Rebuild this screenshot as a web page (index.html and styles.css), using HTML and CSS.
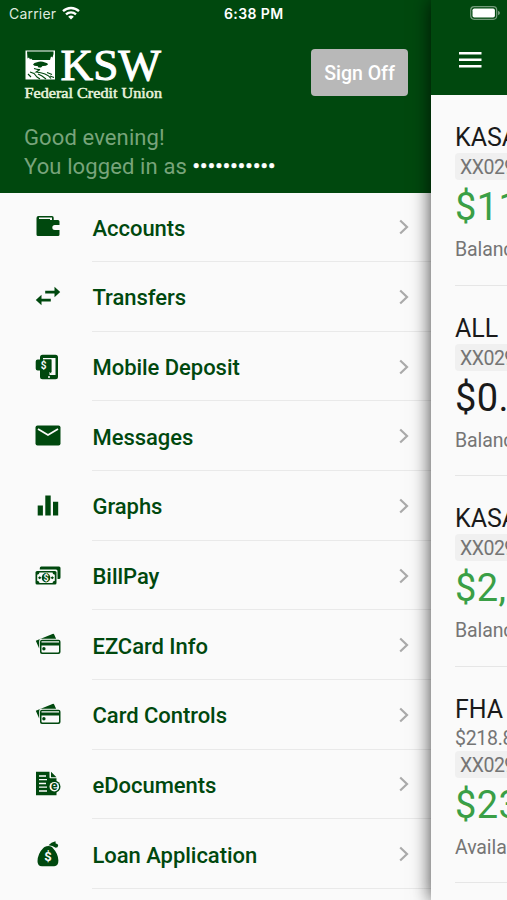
FILE: index.html
```
<!DOCTYPE html>
<html lang="en">
<head>
  <meta charset="UTF-8">
  <meta name="viewport" content="width=device-width, initial-scale=1">
  <title>KSW Federal Credit Union</title>
  <link rel="stylesheet" href="styles.css">
</head>
<body>
  <div class="app">
    <aside class="drawer">
      <header class="drawer-header">
        <div class="status">
          <span class="carrier">Carrier</span>
          <svg class="wifi" viewBox="0 0 18 14" fill="none" stroke="#fff" stroke-width="2.3">
            <path d="M1 5.2C5.6.9 12.4.9 17 5.2M4 8.400c2.900-2.800 7.100-2.800 10 0"/>
            <path d="M9 13.400 6.200 10.700c1.600-1.500 4-1.500 5.600 0z" fill="#fff" stroke="none"/>
          </svg>
          <span class="time">6:38 PM</span>
        </div>
        <div class="brand">
          <svg class="logo" viewBox="0 0 140 54">
            <rect x="1.500" y="2.500" width="29.500" height="29" fill="#fff"/>
            <path d="M3 3.500h26.500v2.500l-1 3.500-1.500-1-1 3.500H8.500l-1.500-1.500-1 1-1-2-1.500 1z" fill="#00480e"/>
            <path d="M9 16.500q1-2 4-2.300 4-1.700 8 .3 3 .5 3 2-2 1.700-5.500 1.500l-1.500 1.500h-2.500l-1-1.500q-3 .5-4.500-1.500z" fill="#00480e"/>
            <path d="M10 20.500q4 1.500 6 1l-4 2.500q5 .5 9 2t6 4.500M6 24l4 1.500 3 3.500 3 2M14 26l4 2 4 3M23 24.500l5 2M26 28l4 1.500M4 26l3 3" fill="none" stroke="#00480e" stroke-width="1.100"/>
            <text class="logo-name" x="36.500" y="31.500" textLength="100.500" lengthAdjust="spacingAndGlyphs">KSW</text>
            <text class="logo-sub" x=".5" y="49.500" textLength="137.500" lengthAdjust="spacingAndGlyphs">Federal Credit Union</text>
          </svg>
          <button class="sign-off">Sign Off</button>
        </div>
        <div class="greeting">Good evening!<br>You logged in as <span class="user">•••••••••••</span></div>
      </header>

      <nav class="menu">
        <a class="menu-item">
          <svg class="icon" viewBox="0 0 26 26"><path d="M1.500 4Q1.500 2 3.500 2H17q1.700 0 1.700 1.700V6H23q1.500 0 1.500 1.500V11H20q-2.700 0-2.700 2.500T20 16h4.500v4.500q0 1.500-1.500 1.500H3q-1.500 0-1.500-1.500z"/><path d="M4 3.500h13V6H15V5H4z" fill="#fafafa"/><path d="M20 11.500h4.500v1.300H20.500v1.500h4v1.200H20q-1.900 0-1.900-2t1.900-2z" fill="#fafafa"/></svg>
          <span class="label">Accounts</span>
          <svg class="chevron" viewBox="0 0 10 16"><path d="m1.200 1.500 6.800 6.500-6.800 6.500"/></svg>
        </a>
        <a class="menu-item">
          <svg class="icon" viewBox="0 0 26 26"><path d="M10.200 6.700h9.300V2.800L25.200 8l-5.700 5.200V9.500h-9.300zM15.800 14.700H6.500v-3.900L.8 16l5.700 5.200v-3.700h9.300z"/></svg>
          <span class="label">Transfers</span>
          <svg class="chevron" viewBox="0 0 10 16"><path d="m1.200 1.500 6.800 6.500-6.800 6.500"/></svg>
        </a>
        <a class="menu-item">
          <svg class="icon" viewBox="0 0 26 26"><path fill-rule="evenodd" d="M7.500.8h13q2.500 0 2.500 2.500v19.400q0 2.500-2.500 2.500h-13Q5 25.200 5 22.700V3.300Q5 .8 7.500.8zM8 4v1.500h8.500V18l-2 0V21h6V4z"/><path d="M.7 7.500q0-2 2-2h13.500V19.500l-3.200-3H2.700q-2 0-2-2z"/><circle cx="14" cy="23" r="1" fill="#fafafa"/><text class="coin" x="8.500" y="14.700">$</text></svg>
          <span class="label">Mobile Deposit</span>
          <svg class="chevron" viewBox="0 0 10 16"><path d="m1.200 1.500 6.800 6.500-6.800 6.500"/></svg>
        </a>
        <a class="menu-item">
          <svg class="icon" viewBox="0 0 26 26"><rect x=".5" y="2.500" width="25" height="20" rx="2"/><path d="m3 6 10 6L23 6" fill="none" stroke="#fafafa" stroke-width="1.800"/></svg>
          <span class="label">Messages</span>
          <svg class="chevron" viewBox="0 0 10 16"><path d="m1.200 1.500 6.800 6.500-6.800 6.500"/></svg>
        </a>
        <a class="menu-item">
          <svg class="icon" viewBox="0 0 26 26"><path d="M2.700 12.500h5.200v10H2.700zM10.300 2.500h5.400v20h-5.400zM18 8.700h5.200v13.800H18z"/></svg>
          <span class="label">Graphs</span>
          <svg class="chevron" viewBox="0 0 10 16"><path d="m1.200 1.500 6.800 6.500-6.800 6.500"/></svg>
        </a>
        <a class="menu-item">
          <svg class="icon" viewBox="0 0 26 26"><path d="M4.800 6.500V5q0-1.500 1.500-1.500H24q1.500 0 1.500 1.500v9.500q0 1.500-1.500 1.500h-1.500V8q0-1.500-1.500-1.500z"/><rect x=".5" y="8" width="21" height="13.500" rx="1.500"/><path d="M4.500 9.500h13q0 2 2.300 2.200v6q-2.300.2-2.300 2.200h-13q0-2-2.300-2.200v-6q2.300-.2 2.300-2.200z" fill="#fafafa"/><ellipse cx="11" cy="14.700" rx="4.300" ry="4.700"/><path d="m3 14.700 1.700-1.500 1.700 1.500-1.700 1.500zM15.600 14.700l1.700-1.500 1.700 1.500-1.700 1.500z"/><text class="coin coin-sm" x="11" y="17.800">$</text></svg>
          <span class="label">BillPay</span>
          <svg class="chevron" viewBox="0 0 10 16"><path d="m1.200 1.500 6.800 6.500-6.800 6.500"/></svg>
        </a>
        <a class="menu-item">
          <svg class="icon" viewBox="0 0 26 26"><path d="M.8 8.800 17.500 2q1.300-.5 1.800.7l1.800 4H6.500Q4.200 6.700 4.200 9v7.500z"/><path fill-rule="evenodd" d="M7 7.700h16.500q2 0 2 2v10.300q0 2-2 2H7q-2 0-2-2V9.700q0-2 2-2zM6.500 9.300v1.300H24V9.300zm0 4.200v6q0 1 1 1H23q1 0 1-1v-6z"/><circle cx="8.900" cy="16.800" r="1.700"/></svg>
          <span class="label">EZCard Info</span>
          <svg class="chevron" viewBox="0 0 10 16"><path d="m1.200 1.500 6.800 6.500-6.800 6.500"/></svg>
        </a>
        <a class="menu-item">
          <svg class="icon" viewBox="0 0 26 26"><path d="M.8 8.800 17.500 2q1.300-.5 1.800.7l1.800 4H6.500Q4.200 6.700 4.200 9v7.500z"/><path fill-rule="evenodd" d="M7 7.700h16.500q2 0 2 2v10.300q0 2-2 2H7q-2 0-2-2V9.700q0-2 2-2zM6.500 9.300v1.300H24V9.300zm0 4.200v6q0 1 1 1H23q1 0 1-1v-6z"/><circle cx="8.900" cy="16.800" r="1.700"/></svg>
          <span class="label">Card Controls</span>
          <svg class="chevron" viewBox="0 0 10 16"><path d="m1.200 1.500 6.800 6.500-6.800 6.500"/></svg>
        </a>
        <a class="menu-item">
          <svg class="icon" viewBox="0 0 26 26"><path d="M1 .8h13.500v5.500q0 1 1 1h6v17H1zM16 .8l5.500 5.500H16z"/><path d="M4 5h7M4 8.700h8M4 12.500h7M4 16.200h8M4 20h8" stroke="#fafafa" stroke-width="1.300"/><circle cx="19.300" cy="15.700" r="6.200"/><circle cx="19.300" cy="15.700" r="4.800" fill="#fafafa"/><text class="e-mark" x="19.300" y="19.300">e</text></svg>
          <span class="label">eDocuments</span>
          <svg class="chevron" viewBox="0 0 10 16"><path d="m1.200 1.500 6.800 6.500-6.800 6.500"/></svg>
        </a>
        <a class="menu-item">
          <svg class="icon" viewBox="0 0 26 26"><path d="M9.500 6q4-1.800 7.500 0l1 1.200q5.200 5.400 5.400 12.400 0 5.700-4.200 5.700H7q-4.500 0-4.500-5Q2.700 12.500 8.300 7zM13.500 4.200q2.500-3 7-4l.2 2.300q2.300.2 2.500 2-.2 2.200-2.500 2.300-3.200-2.200-7.200-2.600z"/><text class="coin coin-lg" x="13" y="19.500">$</text></svg>
          <span class="label">Loan Application</span>
          <svg class="chevron" viewBox="0 0 10 16"><path d="m1.200 1.500 6.800 6.500-6.800 6.500"/></svg>
        </a>
      </nav>
    </aside>

    <main class="panel">
      <header class="panel-header">
        <svg class="battery" viewBox="0 0 30 14">
          <rect x=".7" y=".7" width="26" height="12.600" rx="3.500" fill="none" stroke="#fff" stroke-opacity=".45" stroke-width="1.200"/>
          <rect x="2.500" y="2.500" width="22.400" height="9" rx="1.800" fill="#fff"/>
          <path d="M28 4.800q2 .8 2 2.200t-2 2.200z" fill="#fff" opacity=".45"/>
        </svg>
        <svg class="burger" viewBox="0 0 23 16" fill="#fff"><path d="M0 0h22.500v2.600H0zM0 6.500h22.500v2.600H0zM0 13h22.500v2.600H0z"/></svg>
      </header>
      <section class="account">
        <h2 class="name">KASASA</h2>
        <div class="number">XX029</div>
        <div class="amount positive">$11</div>
        <div class="caption">Balance</div>
      </section>
      <section class="account">
        <h2 class="name">ALL</h2>
        <div class="number">XX029</div>
        <div class="amount">$0.</div>
        <div class="caption">Balance</div>
      </section>
      <section class="account">
        <h2 class="name">KASASA</h2>
        <div class="number">XX029</div>
        <div class="amount positive">$2,</div>
        <div class="caption">Balance</div>
      </section>
      <section class="account">
        <h2 class="name">FHA</h2>
        <div class="detail">$218.8</div>
        <div class="number">XX029</div>
        <div class="amount positive">$23</div>
        <div class="caption">Available</div>
      </section>
    </main>
  </div>
</body>
</html>
```
FILE: styles.css
```
* {
  box-sizing: border-box;
}
body {
  margin: 0;
  background: #fafafa;
  font-family: Roboto, "Liberation Sans", sans-serif;
}
.app {
  display: flex;
  width: 507px;
  height: 900px;
  overflow: hidden;
}

/* Drawer */
.drawer {
  width: 431px;
  flex-shrink: 0;
}
.drawer-header {
  height: 192.5px;
  padding: 3px 23px 0 24px;
  background: #00480e;
  color: #fff;
}
.status {
  display: flex;
  align-items: center;
  height: 20px;
  margin-left: -15px;
  font-family: Inter, sans-serif;
  font-size: 14px;
}
.carrier {
  width: 53px;
  color: #dfeadf;
  letter-spacing: 0.2px;
}
.wifi {
  width: 18px;
  height: 14px;
}
.time {
  margin-left: 144px;
  font-weight: 600;
  letter-spacing: 0.4px;
}
.brand {
  display: flex;
  justify-content: space-between;
  align-items: flex-start;
  height: 74px;
  padding-top: 25.5px;
}
.logo {
  width: 140px;
  height: 54px;
  margin-top: -1px;
}
.logo-name {
  font-family: "Liberation Serif", serif;
  font-size: 44px;
  fill: #fff;
  stroke: #fff;
  stroke-width: 1px;
}
.logo-sub {
  font-family: "Liberation Serif", serif;
  font-size: 14px;
  fill: #e8f3dc;
  stroke: #e8f3dc;
  stroke-width: 0.5px;
}
.sign-off {
  width: 97px;
  height: 47.5px;
  padding: 3px 0 0;
  border: none;
  border-radius: 4px;
  background: #b8b8b8;
  color: #fff;
  font-family: inherit;
  font-size: 19.5px;
  font-weight: 500;
}
.greeting {
  margin-top: 25.5px;
  color: #78a47b;
  font-size: 22px;
  line-height: 29.5px;
  letter-spacing: 0.12px;
  white-space: nowrap;
}
.user {
  color: #fff;
  -webkit-text-stroke: 0.6px #fff;
}
.menu-item {
  display: flex;
  align-items: center;
  position: relative;
  height: 69.65px;
  padding: 0 22px 0 34.5px;
  color: #00480e;
  font-size: 22px;
  font-weight: 500;
}
.menu-item::after {
  content: "";
  position: absolute;
  left: 92px;
  right: 0;
  bottom: 0;
  height: 1px;
  background: #e9e9e9;
}
.icon {
  width: 26px;
  height: 26px;
  fill: #00480e;
}
.label {
  flex: 1;
  margin-left: 32px;
  padding-top: 2px;
  letter-spacing: -0.04px;
}
.chevron {
  width: 10px;
  height: 16px;
  fill: none;
  stroke: #aaa;
  stroke-width: 2.2;
}
.coin,
.e-mark {
  font-size: 10px;
  font-weight: 700;
  letter-spacing: 0;
  text-anchor: middle;
  fill: #fafafa;
}
.coin-sm {
  font-size: 9px;
}
.coin-lg {
  font-size: 13px;
}
.e-mark {
  font-size: 12px;
  fill: #00480e;
}

/* Accounts page pushed to the right */
.panel {
  position: relative;
  width: 400px;
  flex-shrink: 0;
  background: #fafafa;
  box-shadow: 0 0 18px rgba(0, 0, 0, 0.75);
}
.panel-header {
  display: flex;
  flex-direction: column;
  height: 95px;
  padding: 6px 0 0 28px;
  background: #00480e;
}
.battery {
  width: 30px;
  height: 14px;
  margin-left: 11px;
}
.burger {
  width: 23px;
  height: 16px;
  margin-top: 32px;
}
.account {
  height: 190.6px;
  margin-left: 24px;
  padding-top: 27px;
  border-bottom: 1px solid #e6e6e6;
}
.account:last-child {
  height: 216px;
}
.name {
  margin: 0;
  color: #1a1a1a;
  font-size: 25px;
  font-weight: 400;
  line-height: 31px;
}
.detail {
  height: 26px;
  color: #757575;
  font-size: 19.5px;
  line-height: 27px;
  letter-spacing: -0.3px;
}
.number {
  height: 27px;
  padding-left: 5px;
  border-radius: 4px;
  background: #f0f0f0;
  color: #757575;
  font-size: 19.5px;
  line-height: 30px;
  letter-spacing: -0.5px;
}
.amount {
  color: #1a1a1a;
  font-size: 38px;
  line-height: 55px;
  letter-spacing: 0.4px;
}
.amount.positive {
  color: #3a9f46;
}
.caption {
  color: #757575;
  font-size: 19.5px;
  line-height: 29px;
  letter-spacing: -0.1px;
}
```
